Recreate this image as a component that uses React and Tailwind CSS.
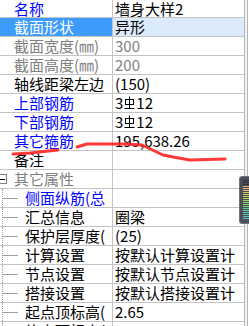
import React from 'react';

const rows = [
  { label: '名称', value: '墙身大样2', labelColor: 'text-[#0000ff]', h: 'h-[18px]' },
  { label: '截面形状', value: '异形', selected: true },
  { label: '截面宽度(㎜)', value: '300', labelColor: 'text-[#808080]', valueColor: 'text-[#808080]' },
  { label: '截面高度(㎜)', value: '200', labelColor: 'text-[#808080]', valueColor: 'text-[#808080]' },
  { label: '轴线距梁左边', value: '(150)' },
  { label: '上部钢筋', value: 'rebar', labelColor: 'text-[#0000ff]' },
  { label: '下部钢筋', value: 'rebar', labelColor: 'text-[#0000ff]' },
  { label: '其它箍筋', value: '195,638.26', labelColor: 'text-[#0000ff]' },
  { label: '备注', value: '' },
];

const treeRows = [
  { label: '侧面纵筋(总', value: '', labelColor: 'text-[#0000ff]' },
  { label: '汇总信息', value: '圈梁' },
  { label: '保护层厚度(', value: '(25)' },
  { label: '计算设置', value: '按默认计算设置计' },
  { label: '节点设置', value: '按默认节点设置计' },
  { label: '搭接设置', value: '按默认搭接设置计' },
  { label: '起点顶标高(', value: '2.65' },
  { label: '终点顶标高(', value: '2.65' },
];

function Rebar() {
  return (
    <span className="inline-flex items-center">
      3
      <svg width="11" height="14" viewBox="0 0 11 14" className="mx-[1px]">
        <rect x="1.5" y="3.5" width="8" height="5" fill="none" stroke="#000" strokeWidth="1" />
        <line x1="5.5" y1="0.5" x2="5.5" y2="12" stroke="#000" strokeWidth="1" />
        <line x1="0.5" y1="12.5" x2="10.5" y2="12.5" stroke="#000" strokeWidth="1" />
      </svg>
      12
    </span>
  );
}

function Row({ row }) {
  return (
    <div className={`flex ${row.h || 'h-[19px]'} border-b border-[#c4c4c4]`}>
      <div
        className={`w-[113px] shrink-0 border-r border-[#c4c4c4] pl-[14px] overflow-hidden whitespace-nowrap leading-[18px] ${
          row.selected ? 'bg-[#3d9cfb] text-white' : row.labelColor || 'text-black'
        }`}
      >
        {row.label}
      </div>
      <div
        className={`flex-1 pl-[2px] overflow-hidden whitespace-nowrap leading-[18px] ${
          row.selected ? 'bg-[#dcebfc]' : ''
        } ${row.valueColor || 'text-black'}`}
      >
        {row.value === 'rebar' ? <Rebar /> : row.value}
      </div>
    </div>
  );
}

function TreeRow({ row }) {
  return (
    <div className="flex h-[19px] border-b border-[#c4c4c4]">
      <div className="w-[113px] shrink-0 border-r border-[#c4c4c4] flex items-center overflow-hidden whitespace-nowrap">
        <div className="w-[3px] self-stretch border-r border-dotted border-[#a0a0a0]" />
        <div className="w-[15px] h-px bg-[#a0a0a0] mr-[7px]" />
        <span className={`leading-[18px] ${row.labelColor || 'text-black'}`}>{row.label}</span>
      </div>
      <div className="flex-1 pl-[2px] overflow-hidden whitespace-nowrap leading-[18px] text-black">{row.value}</div>
    </div>
  );
}

export default function App() {
  return (
    <div
      className="relative w-[249px] h-[326px] overflow-hidden bg-white text-[15px]"
      style={{ fontFamily: '"Noto Sans CJK SC", "Liberation Sans", sans-serif' }}
    >
      <div className="flex h-full">
        <div className="w-[245px] shrink-0 border-r border-[#b8b8b8]">
          {rows.map((r, i) => (
            <Row key={i} row={r} />
          ))}
          <div className="flex h-[19px] border-b border-[#c4c4c4]">
            <div className="w-[113px] shrink-0 border-r border-[#c4c4c4] flex items-center overflow-hidden whitespace-nowrap">
              <div className="ml-[-3px] w-[10px] h-[10px] border border-[#808080] bg-white flex items-center justify-end pr-[1px]">
                <div className="w-[5px] h-px bg-black" />
              </div>
              <span className="ml-[7px] leading-[18px] text-[#808080]">其它属性</span>
            </div>
            <div className="flex-1" />
          </div>
          {treeRows.map((r, i) => (
            <TreeRow key={i} row={r} />
          ))}
        </div>
        <div className="w-[2px] bg-[#f0f0f0]" />
        <div className="w-px bg-[#b8b8b8]" />
        <div className="flex-1 bg-white" />
      </div>

      <svg className="absolute left-0 top-0 pointer-events-none" width="249" height="326">
        <path d="M13,154 L30,153 L58,150" fill="none" stroke="#f22" strokeWidth="3" strokeLinecap="round" strokeLinejoin="round" opacity="0.9" />
        <path
          d="M77,147 L87,144 L125,144 L142,145 L163,155 L173,157 L190,160 L225,159"
          fill="none"
          stroke="#f22"
          strokeWidth="3"
          strokeLinecap="round"
          strokeLinejoin="round"
          opacity="0.9"
        />
      </svg>

      <div className="absolute left-[239px] top-[176px] w-[14px] h-[48px] rounded-[3px] bg-[#4b4f59] border border-[#6e727c] flex flex-col gap-px pt-[3px] pl-[3px]">
        {['#2e3138', '#2e3138', '#2e3138', '#e6a262', '#e8b060', '#e6bd5e', '#dcc65c', '#cfcd5a', '#c0d25c', '#afd45e', '#9ed662', '#8cd668', '#7dd470', '#70d27a', '#66d086', '#60cc94', '#5ec8a2', '#5ec4ae', '#60c0b8', '#62bcc0'].map(
          (c, i) => (
            <div key={i} className="h-px w-[7px]" style={{ backgroundColor: c }} />
          )
        )}
      </div>
    </div>
  );
}
